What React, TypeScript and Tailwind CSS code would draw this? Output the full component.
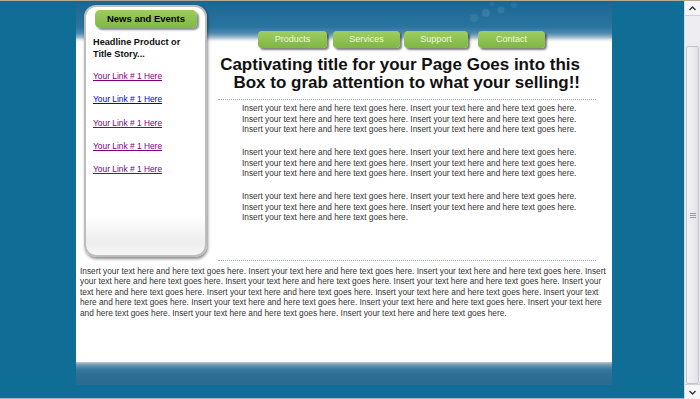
import React from "react";

const sentence = "Insert your text here and here text goes here.";
const repeat = (n: number) => Array(n).fill(sentence).join(" ");

const tabs = [
  { label: "Products", cls: "w-[69px]" },
  { label: "Services", cls: "w-[67px] ml-[6px]" },
  { label: "Support", cls: "w-[64px] ml-[4px]" },
  { label: "Contact", cls: "w-[67px] ml-[10px]" },
];

const links = [
  { label: "Your Link # 1 Here", visited: true },
  { label: "Your Link # 1 Here", visited: false },
  { label: "Your Link # 1 Here", visited: true },
  { label: "Your Link # 1 Here", visited: true },
  { label: "Your Link # 1 Here", visited: true },
];

function Scrollbar() {
  return (
    <div className="w-[16px] h-full flex flex-col bg-[#eeeef2] border-l border-[#d8d8de]">
      <div className="h-[15px] flex items-center justify-center bg-[#f6f6f8] border-b border-[#d0d0d8]">
        <svg width="7" height="5" viewBox="0 0 7 5">
          <path d="M0.5 4 L3.5 1 L6.5 4" fill="none" stroke="#333" strokeWidth="1.4" />
        </svg>
      </div>
      <div className="h-[30px]" />
      <div className="flex-1 mx-[1px] rounded-[2px] border border-[#c4c4ce] bg-[linear-gradient(to_right,#f4f4f7,#e2e2e8)] flex items-center justify-center">
        <div className="flex flex-col gap-[1px]">
          <div className="w-[6px] h-px bg-[#9a9aa6]" />
          <div className="w-[6px] h-px bg-[#9a9aa6]" />
          <div className="w-[6px] h-px bg-[#9a9aa6]" />
        </div>
      </div>
      <div className="h-[15px] flex items-center justify-center bg-[#f6f6f8] border-t border-[#d0d0d8]">
        <svg width="7" height="5" viewBox="0 0 7 5">
          <path d="M0.5 1 L3.5 4 L6.5 1" fill="none" stroke="#333" strokeWidth="1.4" />
        </svg>
      </div>
    </div>
  );
}

function Sidebar() {
  return (
    <div className="ml-[8px] mt-[4px] w-[123px] h-[252px] shrink-0 rounded-[12px] border-2 border-[#bdbdbd] bg-[linear-gradient(to_bottom,#ffffff_84%,#ededed_95%,#f6f6f6)] shadow-[1px_2px_3px_rgba(0,0,0,0.45)] flex flex-col">
      <div className="mt-[3px] ml-[9px] w-[102px] h-[18px] rounded-[5px] bg-[linear-gradient(to_bottom,#9dcc5e,#80b845)] shadow-[2px_2px_2px_rgba(0,0,0,0.45)] flex items-center justify-center text-[9.5px] font-bold text-black">
        News and Events
      </div>
      <div className="mt-[9px] pl-[7px] text-[9.2px] leading-[11.5px] font-bold text-[#111]">
        Headline Product or
        <br />
        Title Story...
      </div>
      <div className="mt-[11px] pl-[7px] flex flex-col gap-[13.3px]">
        {links.map((l, i) => (
          <a
            key={i}
            href="#"
            className={`text-[8.4px] leading-[10px] underline ${l.visited ? "text-[#800080]" : "text-[#0000ee]"}`}
          >
            {l.label}
          </a>
        ))}
      </div>
    </div>
  );
}

function Main() {
  return (
    <div className="ml-[11px] w-[378px] flex flex-col">
      <div className="mt-[30px] ml-[40px] flex">
        {tabs.map((t) => (
          <div
            key={t.label}
            className={`${t.cls} h-[17px] rounded-[4px] bg-[linear-gradient(to_bottom,#9fce60,#7eb644)] shadow-[2px_2px_2px_rgba(0,0,0,0.5)] flex items-center justify-center text-[9px] text-[#eef7e2]`}
          >
            {t.label}
          </div>
        ))}
      </div>
      <h1 className="mt-[8px] w-[362px] text-right text-[17px] leading-[18px] font-bold text-[#111]">
        Captivating title for your Page Goes into this
        <br />
        Box to grab attention to what your selling!!
      </h1>
      <div className="mt-[7px] border-t border-dotted border-[#9eaab8]" />
      <div className="mt-[3px] ml-[24px] w-[345px] flex flex-col gap-[12.5px] text-[8.3px] leading-[10.5px] text-[#333]">
        <p>{repeat(6)}</p>
        <p>{repeat(6)}</p>
        <p>{repeat(5)}</p>
      </div>
      <div className="mt-[37px] border-t border-dotted border-[#9eaab8]" />
    </div>
  );
}

export default function App() {
  return (
    <div className="w-[700px] h-[399px] overflow-hidden flex bg-[#0f6d96] border-t border-[#b3a893] font-['Liberation_Sans',Arial,sans-serif]">
      <div className="flex-1 flex flex-col">
        <div className="ml-[76px] w-[536px] h-[384px] flex flex-col bg-[linear-gradient(to_bottom,#1a6792_0px,#2a74a0_26px,#4a88ae_32px,#97b4c6_36px,#e4ebf0_39px,#ffffff_41px)] relative">
          <svg className="absolute left-[380px] top-0 pointer-events-none" width="110" height="24" viewBox="0 0 110 24">
            <circle cx="18" cy="17" r="4" fill="#ffffff" opacity="0.08" />
            <circle cx="30" cy="12" r="4" fill="#ffffff" opacity="0.1" />
            <circle cx="45" cy="9" r="3.5" fill="#ffffff" opacity="0.09" />
            <circle cx="58" cy="4" r="3" fill="#ffffff" opacity="0.07" />
            <circle cx="36" cy="3" r="2.5" fill="#ffffff" opacity="0.06" />
          </svg>
          <div className="flex">
            <Sidebar />
            <Main />
          </div>
          <p className="mt-[5px] px-[4px] text-[8.3px] leading-[10.5px] text-[#333]">{repeat(15)}</p>
          <div className="flex-1" />
          <div className="h-[23px] bg-[linear-gradient(to_bottom,#b9cad4_0px,#6e97b2_3px,#3a7aa0_7px,#2d6e96_12px,#2a6992_100%)]" />
        </div>
        <div className="flex-1 border-b border-[#9fb8c8]" />
      </div>
      <Scrollbar />
    </div>
  );
}
